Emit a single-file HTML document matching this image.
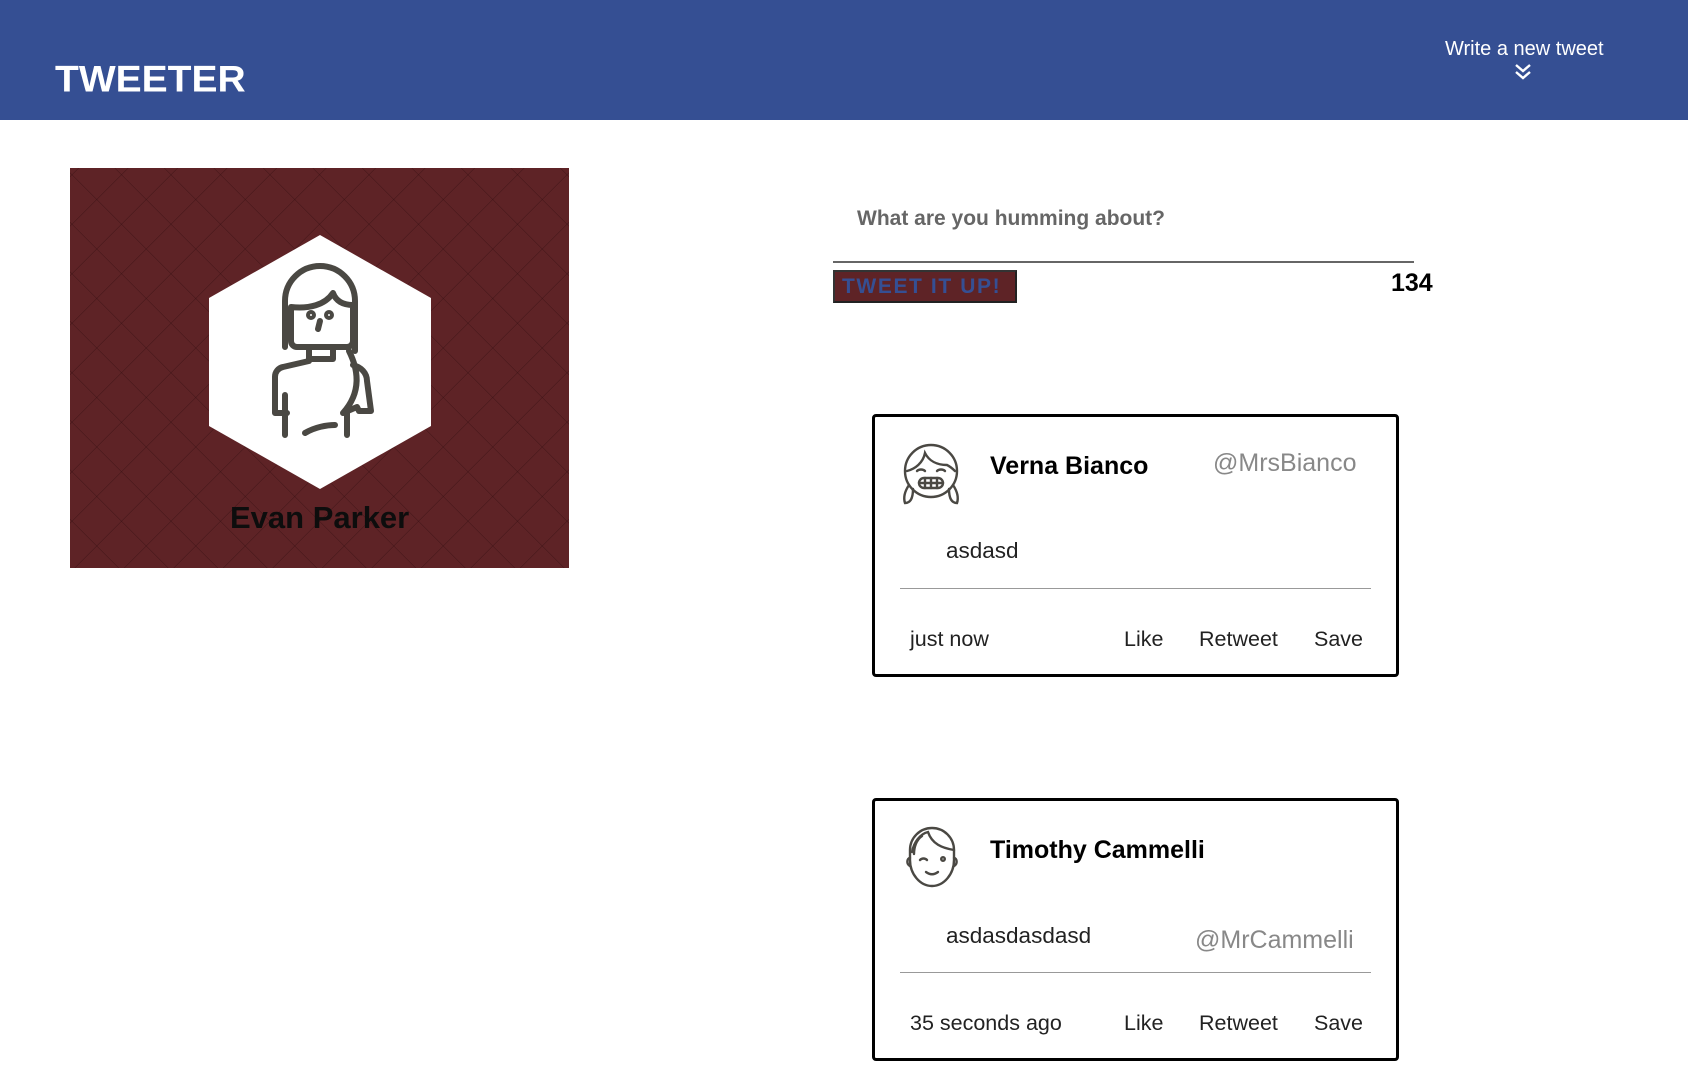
<!DOCTYPE html>
<html><head><meta charset="utf-8"><style>
*{margin:0;padding:0;box-sizing:border-box}
body{width:1688px;height:1085px;background:#fff;position:relative;overflow:hidden;font-family:"Liberation Sans",sans-serif}
.a{position:absolute;line-height:1;white-space:nowrap}
.hdr{position:absolute;left:0;top:0;width:1688px;height:120px;background:#354f93}
.prof{position:absolute;left:70px;top:168px;width:499px;height:400px;background-color:#5e2326;
background-image:repeating-linear-gradient(45deg,transparent 0 34px,rgba(40,10,12,.35) 34px 35px),repeating-linear-gradient(-45deg,transparent 0 34px,rgba(40,10,12,.35) 34px 35px)}
.card{position:absolute;left:872px;width:527px;height:263px;border:3px solid #000;border-radius:4px}
.hr{position:absolute;height:1px;background:#999}
.ft{font-size:21.5px;color:#222}
</style></head><body>
<div class="hdr"></div>
<div class="a" style="left:55px;top:61px;font-size:39px;font-weight:900;color:#fff;transform:scaleY(0.95);transform-origin:left top">TWEETER</div>
<div class="a" style="left:1445px;top:39px;font-size:20px;color:#fff">Write a new tweet</div>
<svg class="a" style="left:1514px;top:63px" width="18" height="18" viewBox="0 0 18 18"><path d="M2 2l7 6 7-6M2 9l7 6 7-6" fill="none" stroke="#fff" stroke-width="2.4"/></svg>

<div class="prof"></div>
<svg class="a" style="left:209px;top:235px" width="222" height="254" viewBox="0 0 222 254"><polygon points="111,0 222,63 222,191 111,254 0,191 0,63" fill="#fff"/>
<g fill="none" stroke="#4a4843" stroke-width="6" stroke-linecap="round" stroke-linejoin="round">
<path d="M76 112V66a35 35 0 0 1 70 0v50"/>
<path d="M82 72c18 2 34-2 42-14c3 8 10 12 20 12v36a6 6 0 0 1-6 6H88a6 6 0 0 1-6-6z"/>
<path d="M100 112v12h24v-12"/>
<path d="M100 126l-26 6a10 10 0 0 0-8 10v36h12M76 160v40"/>
<path d="M140 116c10 20 12 42 -6 62l14-6 2 4h12l-4-30c0-8-6-14-14-16"/>
<path d="M138 178v22M96 198c10-6 22-8 30-8"/>
<circle cx="102" cy="80" r="2"/><circle cx="120" cy="80" r="2"/><path d="M111 86l-2 8"/>
</g></svg>
<div class="a" style="left:230px;top:502px;font-size:31px;font-weight:bold;color:#0d0d0d">Evan Parker</div>

<div class="a" style="left:857px;top:208px;font-size:21px;font-weight:bold;color:#666">What are you humming about?</div>
<div class="a" style="left:833px;top:261px;width:581px;height:2px;background:#666"></div>
<div class="a" style="left:833px;top:270px;width:184px;height:33px;background:#5e2326;border:2px solid #333;border-right-color:#222;border-bottom-color:#222"></div>
<div class="a" style="left:842px;top:276px;font-size:21px;font-weight:900;color:#354f93;letter-spacing:1.6px">TWEET IT UP!</div>
<div class="a" style="left:1391px;top:271px;font-size:25px;font-weight:900;color:#000">134</div>

<div class="card" style="top:414px"></div>
<svg class="a" style="left:898px;top:441px" width="66" height="66" viewBox="0 0 64 66"><g fill="none" stroke="#4a4843" stroke-width="2.4" stroke-linecap="round">
<circle cx="32" cy="30" r="26"/><path d="M8 30c8-2 16-8 18-18c4 8 12 12 22 12c4 2 6 4 8 6"/>
<path d="M10 44c-4 6-6 12-4 18c6 0 8-6 8-14M54 44c4 6 6 12 4 18c-6 0-8-6-8-14"/>
<path d="M18 30c2-2 6-2 8 0M38 30c2-2 6-2 8 0"/><rect x="20" y="37" width="24" height="10" rx="5"/><path d="M26 37v10M32 37v10M38 37v10M20 42h24"/></g></svg>
<div class="a" style="left:990px;top:454px;font-size:25px;font-weight:bold;color:#000">Verna Bianco</div>
<div class="a" style="left:1213px;top:451px;font-size:25px;color:#888">@MrsBianco</div>
<div class="a" style="left:946px;top:540px;font-size:22.5px;color:#222">asdasd</div>
<div class="hr" style="left:900px;top:588px;width:471px"></div>
<div class="a ft" style="left:910px;top:629px">just now</div>
<div class="a ft" style="left:1124px;top:629px">Like</div>
<div class="a ft" style="left:1199px;top:629px">Retweet</div>
<div class="a ft" style="left:1314px;top:629px">Save</div>

<div class="card" style="top:798px"></div>
<svg class="a" style="left:900px;top:824px" width="64" height="66" viewBox="0 0 64 66"><g fill="none" stroke="#4a4843" stroke-width="2.4" stroke-linecap="round">
<path d="M10 26a22 22 0 0 1 44 0v10c0 14-10 26-22 26S10 50 10 36z"/><path d="M12 28c2-10 8-18 16-20c4 12 14 16 26 18"/><path d="M22 12c-6 4-8 12-8 18"/>
<path d="M10 34c-3 0-4 6 0 8M54 34c3 0 4 6 0 8"/><path d="M20 36c2-2 5-2 7 0"/><circle cx="43" cy="35" r="1.8"/><path d="M26 48c4 3 8 3 12 0"/></g></svg>
<div class="a" style="left:990px;top:838px;font-size:25px;font-weight:bold;color:#000">Timothy Cammelli</div>
<div class="a" style="left:946px;top:925px;font-size:22.5px;color:#222">asdasdasdasd</div>
<div class="a" style="left:1195px;top:928px;font-size:25px;color:#888">@MrCammelli</div>
<div class="hr" style="left:900px;top:972px;width:471px"></div>
<div class="a ft" style="left:910px;top:1013px">35 seconds ago</div>
<div class="a ft" style="left:1124px;top:1013px">Like</div>
<div class="a ft" style="left:1199px;top:1013px">Retweet</div>
<div class="a ft" style="left:1314px;top:1013px">Save</div>
</body></html>
